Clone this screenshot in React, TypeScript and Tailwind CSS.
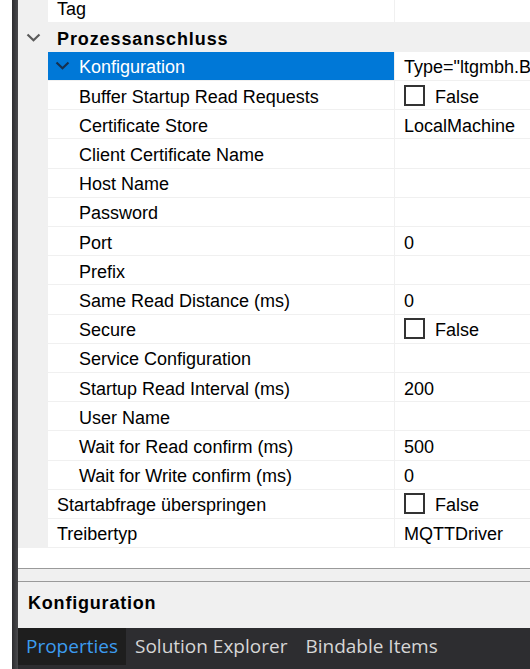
import React from "react";

type Item = {
  label: string;
  level: 1 | 2 | 3;
  value?: string;
  check?: boolean;
  selected?: boolean;
};

const items: Item[] = [
  { label: "Buffer Startup Read Requests", level: 3, check: true, value: "False" },
  { label: "Certificate Store", level: 3, value: "LocalMachine" },
  { label: "Client Certificate Name", level: 3 },
  { label: "Host Name", level: 3 },
  { label: "Password", level: 3 },
  { label: "Port", level: 3, value: "0" },
  { label: "Prefix", level: 3 },
  { label: "Same Read Distance (ms)", level: 3, value: "0" },
  { label: "Secure", level: 3, check: true, value: "False" },
  { label: "Service Configuration", level: 3 },
  { label: "Startup Read Interval (ms)", level: 3, value: "200" },
  { label: "User Name", level: 3 },
  { label: "Wait for Read confirm (ms)", level: 3, value: "500" },
  { label: "Wait for Write confirm (ms)", level: 3, value: "0" },
  { label: "Startabfrage überspringen", level: 1, check: true, value: "False" },
  { label: "Treibertyp", level: 1, value: "MQTTDriver" },
];

function Chevron({ color }: { color: string }) {
  return (
    <svg width="15" height="9" viewBox="0 0 15 9" className="shrink-0">
      <path d="M1.5 1.5 L7.5 7.2 L13.5 1.5" fill="none" stroke={color} strokeWidth="2.2" />
    </svg>
  );
}

function ValueCell({ value, check }: { value?: string; check?: boolean }) {
  return (
    <div className="flex min-w-0 flex-1 items-center overflow-hidden whitespace-nowrap border-b border-l border-[#f0f0f0] pl-[9px]">
      {check && <span className="mr-[10px] h-[21px] w-[21px] shrink-0 border-2 border-[#333333] bg-white" />}
      {value && <span className="pt-[4px]">{value}</span>}
    </div>
  );
}

function PropRow({ item }: { item: Item }) {
  return (
    <div className="flex h-[29.2px] shrink-0">
      <div className="w-[30px] shrink-0 bg-[#f0f0f0]" />
      <div
        className={
          item.level === 1
            ? "flex w-[346px] shrink-0 items-center border-b border-[#f0f0f0] pl-[9px] whitespace-nowrap"
            : "flex w-[346px] shrink-0 items-center border-b border-[#f0f0f0] pl-[31px] whitespace-nowrap"
        }
      >
        <span className="pt-[4px]">{item.label}</span>
      </div>
      <ValueCell value={item.value} check={item.check} />
    </div>
  );
}

export default function App() {
  return (
    <div className="flex h-[669px] w-[530px] overflow-hidden bg-white font-['Liberation_Sans',Arial,sans-serif] text-[18px] text-black">
      <div className="w-[12px] shrink-0 bg-white" />
      <div className="w-[6px] shrink-0 bg-gradient-to-r from-[#2d2d30] to-[#4a4a4d]" />
      <div className="flex min-w-0 flex-1 flex-col">
        {/* property grid */}
        <div className="flex h-[568px] shrink-0 flex-col overflow-hidden bg-white">
          <div className="-mt-[6.5px] flex flex-col">
            <PropRow item={{ label: "Tag", level: 1 }} />
            {/* category */}
            <div className="flex h-[29.2px] shrink-0 items-center bg-[#f0f0f0]">
              <div className="flex w-[30px] shrink-0 justify-center">
                <Chevron color="#5a5a5a" />
              </div>
              <span className="pl-[9px] pt-[4px] font-bold tracking-[0.9px]">Prozessanschluss</span>
            </div>
            {/* selected expandable entry */}
            <div className="flex h-[29.2px] shrink-0">
              <div className="w-[30px] shrink-0 bg-[#f0f0f0]" />
              <div className="flex w-[346px] shrink-0 items-center border-b border-[#f0f0f0] bg-[#0078d7] pl-[7px] text-white">
                <Chevron color="#16304f" />
                <span className="ml-[9px] pt-[4px]">Konfiguration</span>
              </div>
              <ValueCell value={'Type="ltgmbh.Bindable.Drivers.Mqtt.MqttConfiguration"'} />
            </div>
            {items.map((it) => (
              <PropRow key={it.label} item={it} />
            ))}
          </div>
        </div>
        <div className="h-px shrink-0 bg-[#9a9a9a]" />
        <div className="h-[12px] shrink-0 bg-[#f0f0f0]" />
        <div className="h-px shrink-0 bg-[#9a9a9a]" />
        {/* description */}
        <div className="flex h-[46px] shrink-0 items-center bg-[#f0f0f0] pb-[4px] pl-[10px]">
          <span className="font-bold tracking-[0.8px]">Konfiguration</span>
        </div>
        {/* tool window tabs */}
        <div className="flex h-[41px] shrink-0 items-start bg-[#2d2d30] font-['Open_Sans',sans-serif] text-[19px]">
          <div className="flex h-[37px] items-center bg-[#1e1e1e] px-[8px] text-[#3c9cf0]">Properties</div>
          <div className="flex h-[37px] items-center px-[9px] text-[#d6d6d6]">Solution Explorer</div>
          <div className="flex h-[37px] items-center px-[9px] text-[#d6d6d6]">Bindable Items</div>
        </div>
      </div>
    </div>
  );
}
